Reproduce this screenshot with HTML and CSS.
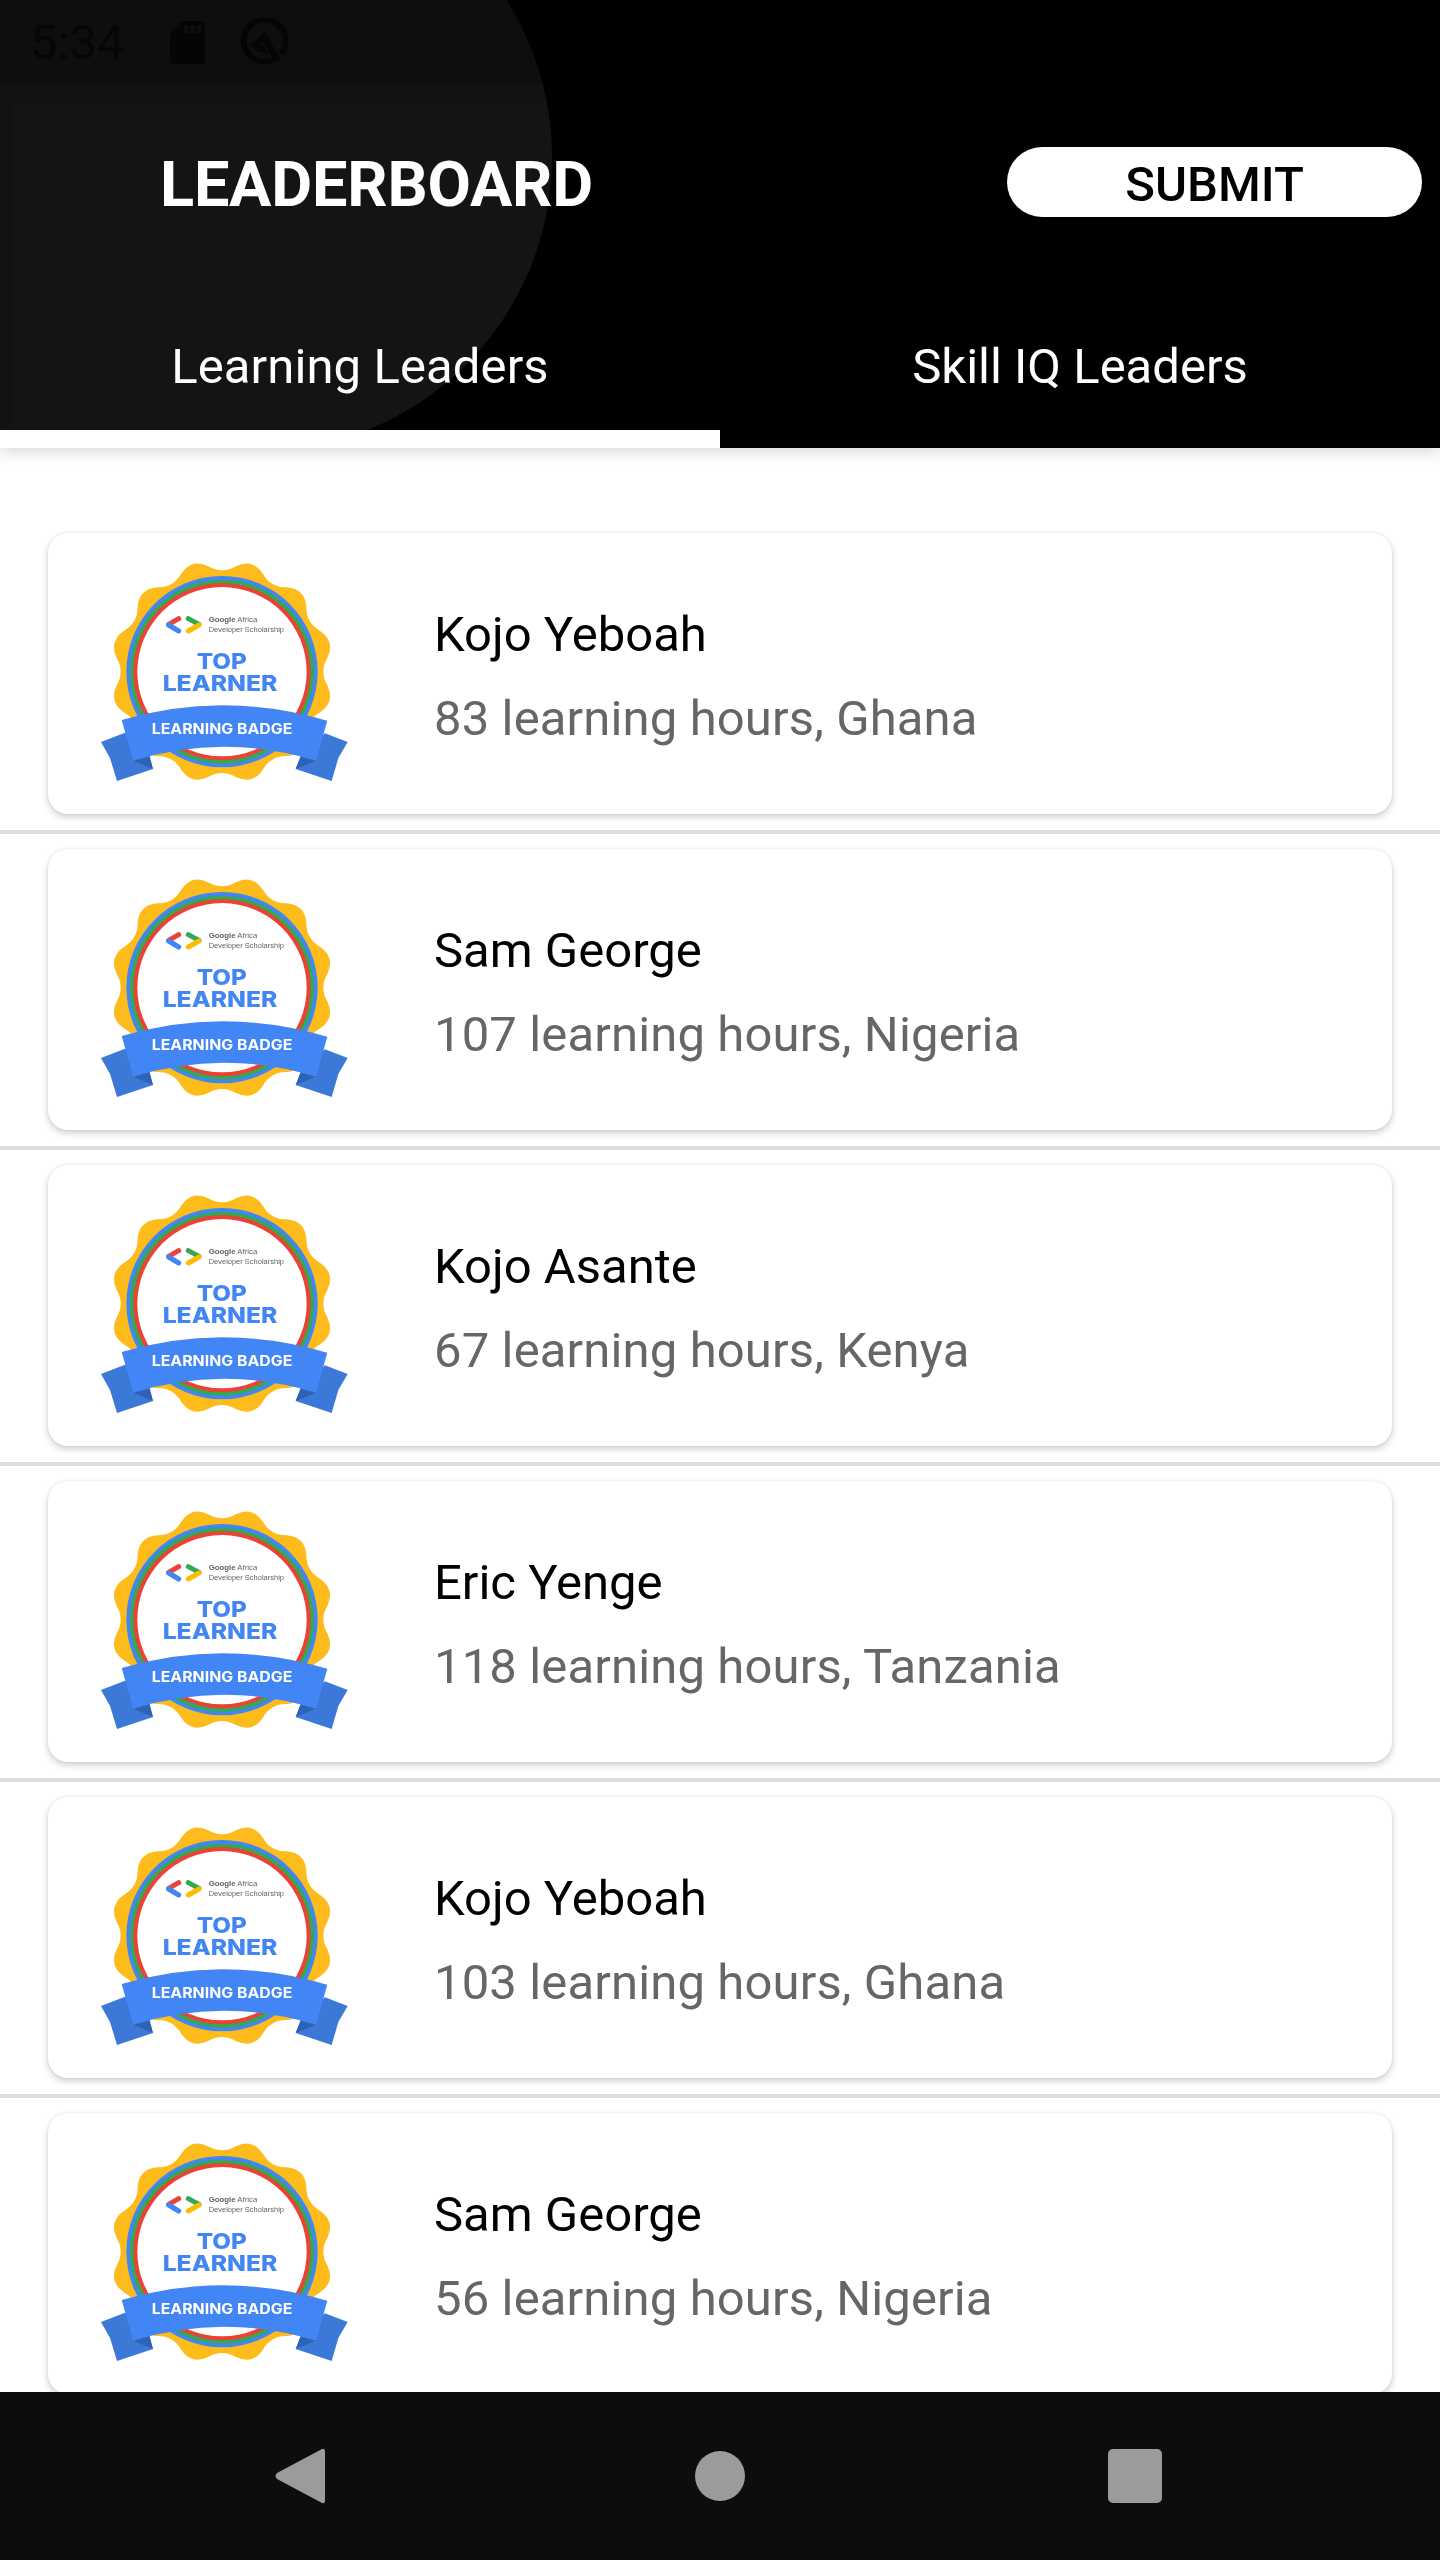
FILE: index.html
```html
<!DOCTYPE html>
<html lang="en">
<head>
  <meta charset="UTF-8" />
  <meta name="viewport" content="width=device-width, initial-scale=1.0"/>
  <title>Leaderboard</title>
  <link rel="stylesheet" href="styles.css">
</head>
<body>

  <!-- badge artwork is drawn once, every row reuses it and adds its own text -->
  <svg class="defs" width="0" height="0">
    <defs>
      <g id="badge-art">
        <g transform="translate(426 365)">
          <path fill="#fdbc1c" d="M-41.6 -316.3 Q0 -291.7 41.6 -316.3 Q91 -339.7 122.1 -294.7 Q145.9 -252.6 194.2 -253.1 Q248.7 -248.7 253.1 -194.2 Q252.6 -145.9 294.7 -122.1 Q339.7 -91 316.3 -41.6 Q291.7 0 316.3 41.6 Q339.7 91 294.7 122.1 Q252.6 145.9 253.1 194.2 Q248.7 248.7 194.2 253.1 Q145.9 252.6 122.1 294.7 Q91 339.7 41.6 316.3 Q0 291.7 -41.6 316.3 Q-91 339.7 -122.1 294.7 Q-145.9 252.6 -194.2 253.1 Q-248.7 248.7 -253.1 194.2 Q-252.6 145.9 -294.7 122.1 Q-339.7 91 -316.3 41.6 Q-291.7 0 -316.3 -41.6 Q-339.7 -91 -294.7 -122.1 Q-252.6 -145.9 -253.1 -194.2 Q-248.7 -248.7 -194.2 -253.1 Q-145.9 -252.6 -122.1 -294.7 Q-91 -339.7 -41.6 -316.3 Z"/>
          <circle r="287" fill="#4285f4"/>
          <circle r="276" fill="#34a853"/>
          <circle r="266" fill="#ea4335"/>
          <circle r="254" fill="#fff"/>
        </g>
        <g fill="none" stroke-width="15" stroke-linecap="round">
          <path stroke="#ea4335" d="M296 206 L266 223"/>
          <path stroke="#4285f4" d="M266 225 L296 243"/>
          <path stroke="#34a853" d="M325 206 L357 223"/>
          <path stroke="#fbbc04" d="M357 225 L325 243"/>
        </g>
        <path fill="#3b78d8" d="M135 548 L63 576 L90 624 L111 693 L219 657 L205 610 Z"/>
        <path fill="#3b78d8" d="M735 550 L803 576 L775 624 L755 693 L647 657 L665 612 Z"/>
        <path fill="#2f62b5" d="M160 632 L208 615 L219 657 Z"/>
        <path fill="#2f62b5" d="M708 632 L665 612 L647 657 Z"/>
        <path fill="#4285f4" d="M125 510 Q430 420 742 512 L708 632 Q430 548 160 632 Z"/>
      </g>
    </defs>
  </svg>

  <div class="screen">
    <header class="top">
      <div class="top-shape"></div>

      <div class="status-bar">
        <span class="clock">5:34</span>
        <svg class="status-sd" viewBox="0 0 35 43">
          <path d="M12 0 H31 a4 4 0 0 1 4 4 V39 a4 4 0 0 1 -4 4 H4 a4 4 0 0 1 -4 -4 V12 Z"/>
          <path class="sd-notch" d="M14 4 h4 v8 h-4 Z M20.5 4 h4 v8 h-4 Z M27 4 h4 v8 h-4 Z"/>
        </svg>
        <svg class="status-q" viewBox="0 0 48 48">
          <path class="q-ring" d="M33 42 A21 21 0 1 1 41 36"/>
          <path class="q-ring" d="M13 29 L24 18.5 L38 43"/>
          <path class="q-fill" d="M15 32 L23 26 L28 36 Z"/>
        </svg>
      </div>

      <div class="toolbar">
        <h1 class="title">LEADERBOARD</h1>
        <button class="submit-btn">SUBMIT</button>
      </div>

      <div class="tabs">
        <div class="tab active">Learning Leaders</div>
        <div class="tab">Skill IQ Leaders</div>
      </div>
    </header>

    <main class="list">
      <div class="row">
        <div class="card">
          <svg class="badge" viewBox="0 0 870 720">
            <use href="#badge-art"/>
            <text class="logo-text" x="386" y="216" font-size="21" textLength="146" lengthAdjust="spacingAndGlyphs"><tspan font-weight="700">Google</tspan> Africa</text>
            <text class="logo-text" x="386" y="245" font-size="21" textLength="226" lengthAdjust="spacingAndGlyphs">Developer Scholarship</text>
            <text class="badge-title" x="350" y="358" font-size="65" textLength="150" lengthAdjust="spacingAndGlyphs">TOP</text>
            <text class="badge-title" x="248" y="422" font-size="65" textLength="344" lengthAdjust="spacingAndGlyphs">LEARNER</text>
            <text class="badge-ribbon" x="215" y="551" font-size="42" textLength="422" lengthAdjust="spacingAndGlyphs">LEARNING BADGE</text>
          </svg>
          <div class="info">
            <div class="name">Kojo Yeboah</div>
            <div class="hours">83 learning hours, Ghana</div>
          </div>
        </div>
      </div>
      <div class="row">
        <div class="card">
          <svg class="badge" viewBox="0 0 870 720">
            <use href="#badge-art"/>
            <text class="logo-text" x="386" y="216" font-size="21" textLength="146" lengthAdjust="spacingAndGlyphs"><tspan font-weight="700">Google</tspan> Africa</text>
            <text class="logo-text" x="386" y="245" font-size="21" textLength="226" lengthAdjust="spacingAndGlyphs">Developer Scholarship</text>
            <text class="badge-title" x="350" y="358" font-size="65" textLength="150" lengthAdjust="spacingAndGlyphs">TOP</text>
            <text class="badge-title" x="248" y="422" font-size="65" textLength="344" lengthAdjust="spacingAndGlyphs">LEARNER</text>
            <text class="badge-ribbon" x="215" y="551" font-size="42" textLength="422" lengthAdjust="spacingAndGlyphs">LEARNING BADGE</text>
          </svg>
          <div class="info">
            <div class="name">Sam George</div>
            <div class="hours">107 learning hours, Nigeria</div>
          </div>
        </div>
      </div>
      <div class="row">
        <div class="card">
          <svg class="badge" viewBox="0 0 870 720">
            <use href="#badge-art"/>
            <text class="logo-text" x="386" y="216" font-size="21" textLength="146" lengthAdjust="spacingAndGlyphs"><tspan font-weight="700">Google</tspan> Africa</text>
            <text class="logo-text" x="386" y="245" font-size="21" textLength="226" lengthAdjust="spacingAndGlyphs">Developer Scholarship</text>
            <text class="badge-title" x="350" y="358" font-size="65" textLength="150" lengthAdjust="spacingAndGlyphs">TOP</text>
            <text class="badge-title" x="248" y="422" font-size="65" textLength="344" lengthAdjust="spacingAndGlyphs">LEARNER</text>
            <text class="badge-ribbon" x="215" y="551" font-size="42" textLength="422" lengthAdjust="spacingAndGlyphs">LEARNING BADGE</text>
          </svg>
          <div class="info">
            <div class="name">Kojo Asante</div>
            <div class="hours">67 learning hours, Kenya</div>
          </div>
        </div>
      </div>
      <div class="row">
        <div class="card">
          <svg class="badge" viewBox="0 0 870 720">
            <use href="#badge-art"/>
            <text class="logo-text" x="386" y="216" font-size="21" textLength="146" lengthAdjust="spacingAndGlyphs"><tspan font-weight="700">Google</tspan> Africa</text>
            <text class="logo-text" x="386" y="245" font-size="21" textLength="226" lengthAdjust="spacingAndGlyphs">Developer Scholarship</text>
            <text class="badge-title" x="350" y="358" font-size="65" textLength="150" lengthAdjust="spacingAndGlyphs">TOP</text>
            <text class="badge-title" x="248" y="422" font-size="65" textLength="344" lengthAdjust="spacingAndGlyphs">LEARNER</text>
            <text class="badge-ribbon" x="215" y="551" font-size="42" textLength="422" lengthAdjust="spacingAndGlyphs">LEARNING BADGE</text>
          </svg>
          <div class="info">
            <div class="name">Eric Yenge</div>
            <div class="hours">118 learning hours, Tanzania</div>
          </div>
        </div>
      </div>
      <div class="row">
        <div class="card">
          <svg class="badge" viewBox="0 0 870 720">
            <use href="#badge-art"/>
            <text class="logo-text" x="386" y="216" font-size="21" textLength="146" lengthAdjust="spacingAndGlyphs"><tspan font-weight="700">Google</tspan> Africa</text>
            <text class="logo-text" x="386" y="245" font-size="21" textLength="226" lengthAdjust="spacingAndGlyphs">Developer Scholarship</text>
            <text class="badge-title" x="350" y="358" font-size="65" textLength="150" lengthAdjust="spacingAndGlyphs">TOP</text>
            <text class="badge-title" x="248" y="422" font-size="65" textLength="344" lengthAdjust="spacingAndGlyphs">LEARNER</text>
            <text class="badge-ribbon" x="215" y="551" font-size="42" textLength="422" lengthAdjust="spacingAndGlyphs">LEARNING BADGE</text>
          </svg>
          <div class="info">
            <div class="name">Kojo Yeboah</div>
            <div class="hours">103 learning hours, Ghana</div>
          </div>
        </div>
      </div>
      <div class="row">
        <div class="card">
          <svg class="badge" viewBox="0 0 870 720">
            <use href="#badge-art"/>
            <text class="logo-text" x="386" y="216" font-size="21" textLength="146" lengthAdjust="spacingAndGlyphs"><tspan font-weight="700">Google</tspan> Africa</text>
            <text class="logo-text" x="386" y="245" font-size="21" textLength="226" lengthAdjust="spacingAndGlyphs">Developer Scholarship</text>
            <text class="badge-title" x="350" y="358" font-size="65" textLength="150" lengthAdjust="spacingAndGlyphs">TOP</text>
            <text class="badge-title" x="248" y="422" font-size="65" textLength="344" lengthAdjust="spacingAndGlyphs">LEARNER</text>
            <text class="badge-ribbon" x="215" y="551" font-size="42" textLength="422" lengthAdjust="spacingAndGlyphs">LEARNING BADGE</text>
          </svg>
          <div class="info">
            <div class="name">Sam George</div>
            <div class="hours">56 learning hours, Nigeria</div>
          </div>
        </div>
      </div>
    </main>

    <nav class="nav-bar">
      <svg class="nav-back" viewBox="0 0 50 56"><path d="M47 1 Q50 0 50 4 V52 Q50 56 47 55 L2 31 Q-1 28 2 25 Z"/></svg>
      <svg class="nav-home" viewBox="0 0 50 50"><circle cx="25" cy="25" r="25"/></svg>
      <svg class="nav-recent" viewBox="0 0 54 54"><rect width="54" height="54" rx="5"/></svg>
    </nav>
  </div>

</body>
</html>
```

FILE: styles.css
```css
body {
  margin: 0;
  font-family: Roboto, "Liberation Sans", sans-serif;
  background-color: #fff;
}

.defs {
  position: absolute;
}

.screen {
  display: flex;
  flex-direction: column;
  height: 2560px;
  overflow: hidden;
}

/* header */
.top {
  position: relative;
  z-index: 1;
  flex: none;
  height: 448px;
  background-color: #000;
  box-shadow: 0 5px 14px rgba(0, 0, 0, 0.14);
  overflow: hidden;
}

/* the lighter blob behind the header, right side follows a big circle */
.top-shape {
  position: absolute;
  left: 0;
  top: -137px;
  width: 552px;
  height: 588px;
  border-radius: 0 294px 294px 0;
  background:
    linear-gradient(#121212, #121212) 0 240px / 13px 100% no-repeat,
    linear-gradient(#0e0e0e 0 221px, #121212 221px 240px, #141414 240px);
}

.status-bar {
  position: relative;
  display: flex;
  align-items: center;
  height: 84px;
  padding-left: 30px;
}

.clock {
  width: 140px;
  font-size: 49px;
  color: #060606;
}

.status-sd {
  width: 35px;
  height: 43px;
  margin-right: 35px;
  fill: #050505;
}

.sd-notch {
  fill: #0e0e0e;
}

.status-q {
  width: 48px;
  height: 48px;
}

.q-ring {
  fill: none;
  stroke: #050505;
  stroke-width: 6;
}

.q-fill {
  fill: #050505;
}

.toolbar {
  position: relative;
  display: flex;
  align-items: center;
  justify-content: space-between;
  height: 196px;
  padding: 0 18px 0 160px;
}

.title {
  margin: 0;
  padding-top: 5px;
  font-size: 63px;
  font-weight: 700;
  letter-spacing: -0.2px;
  color: #fff;
}

.submit-btn {
  width: 415px;
  height: 70px;
  padding: 4px 0 0;
  border: none;
  border-radius: 35px;
  background-color: #fff;
  color: #000;
  font-family: inherit;
  font-size: 49px;
  font-weight: 500;
}

.tabs {
  position: relative;
  display: flex;
  height: 168px;
}

.tab {
  flex: 1;
  display: flex;
  align-items: center;
  justify-content: center;
  padding-top: 4px;
  font-size: 49px;
  color: #fff;
}

.tab.active {
  letter-spacing: 0.1px;
  box-shadow: inset 0 -18px 0 #fff;
}

/* list */
.list {
  flex: 1;
  min-height: 0;
  padding-top: 70px;
}

.row {
  padding: 15px 48px 16px;
  border-bottom: 4px solid #dedede;
}

.card {
  display: flex;
  align-items: center;
  height: 281px;
  padding-left: 32px;
  background-color: #fff;
  border-radius: 20px;
  box-shadow: 0 3px 7px rgba(0, 0, 0, 0.2), 0 0 2px rgba(0, 0, 0, 0.08);
}

.badge {
  flex: none;
  width: 290px;
  height: 240px;
  margin: 0 64px 7px 0;
  filter: blur(0.5px);
}

.logo-text {
  font-family: "Liberation Sans", sans-serif;
  fill: #5f6368;
}

.badge-title,
.badge-ribbon {
  font-family: Inter, "Liberation Sans", sans-serif;
}

.badge-title {
  font-weight: 800;
  fill: #4285f4;
}

.badge-ribbon {
  font-weight: 700;
  fill: #fff;
}

.info {
  padding-top: 6px;
}

.name {
  font-size: 49px;
  color: #000;
  margin-bottom: 27px;
}

.hours {
  font-size: 49px;
  letter-spacing: 0.13px;
  color: #666;
}

/* bottom bar */
.nav-bar {
  position: relative;
  z-index: 2;
  flex: none;
  display: flex;
  align-items: center;
  height: 168px;
  padding-left: 275px;
  background-color: #0d0d0d;
}

.nav-bar svg {
  fill: #9b9b9b;
}

.nav-back {
  width: 50px;
  height: 56px;
}

.nav-home {
  width: 50px;
  height: 50px;
  margin: 0 363px 0 370px;
}

.nav-recent {
  width: 54px;
  height: 54px;
}
```
